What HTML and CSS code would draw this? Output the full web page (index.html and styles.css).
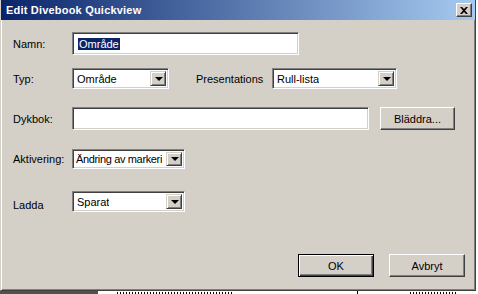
FILE: index.html
```html
<!DOCTYPE html>
<html lang="sv">
<head>
    <meta charset="UTF-8">
    <title>Edit Divebook Quickview</title>
    <link rel="stylesheet" href="styles.css">
</head>
<body>
    <div class="window">
        <div class="titlebar">
            <span class="title">Edit Divebook Quickview</span>
            <span class="close">
                <svg width="8" height="7" viewBox="0 0 8 7"><path d="M0 0h2l2 2 2-2h2L5 3.5 8 7H6L4 5 2 7H0l3-3.5z" fill="#000"/></svg>
            </span>
        </div>

        <div class="content">
            <div class="row row-namn">
                <label class="lbl">Namn:</label>
                <div class="field w-namn"><span class="sel">Område</span></div>
            </div>

            <div class="row row-typ">
                <label class="lbl">Typ:</label>
                <div class="combo w-typ"><span class="val">Område</span><span class="drop"></span></div>
                <label class="lbl-pres">Presentations</label>
                <div class="combo w-pres"><span class="val">Rull-lista</span><span class="drop"></span></div>
            </div>

            <div class="row row-dykbok">
                <label class="lbl">Dykbok:</label>
                <div class="field w-dykbok"></div>
                <button class="btn btn-browse">Bläddra...</button>
            </div>

            <div class="row row-akt">
                <label class="lbl">Aktivering:</label>
                <div class="combo w-akt"><span class="val">Ändring av markeri</span><span class="drop"></span></div>
            </div>

            <div class="row row-ladda">
                <label class="lbl lbl-low">Ladda</label>
                <div class="combo w-akt"><span class="val">Sparat</span><span class="drop"></span></div>
            </div>

            <div class="row row-buttons">
                <button class="btn btn-default">OK</button>
                <button class="btn">Avbryt</button>
            </div>
        </div>
    </div>

    <!-- bit of the window behind the dialog -->
    <div class="desk">
        <span class="desk-dark"></span>
        <span class="desk-ticks t1"></span>
        <span class="desk-line"></span>
        <span class="desk-ticks t2"></span>
    </div>
</body>
</html>
```

FILE: styles.css
```css
:root {
    --face: #d4d0c8;
    --shadow: #808080;
    --dark: #404040;
    --hilite: #ffffff;
    --navy: #0a246a;
}

body {
    margin: 0;
    background: #ffffff;
    font-family: 'Liberation Sans', Arial, sans-serif;
    font-size: 11px;
    color: #000;
}

.window {
    width: 472px;
    height: 289px;
    background: var(--face);
    border: 1px solid;
    border-top: 0;
    border-color: var(--face) var(--dark) var(--dark) var(--face);
    padding: 0 1px 1px 1px;
    box-shadow: inset 1px 0 var(--hilite), inset -1px -1px var(--shadow);
    display: flex;
    flex-direction: column;
}

.titlebar {
    height: 20px;
    margin: 0 -1px 0 -1px;
    background: linear-gradient(to right, var(--navy), #a6caf0);
    display: flex;
    align-items: center;
    justify-content: space-between;
    padding: 0 3px 0 5px;
}

.title {
    color: #fff;
    font-weight: bold;
    font-size: 11px;
    letter-spacing: 0.2px;
}

.close {
    width: 16px;
    height: 14px;
    box-sizing: border-box;
    background: var(--face);
    border: 1px solid;
    border-color: var(--hilite) var(--dark) var(--dark) var(--hilite);
    box-shadow: inset -1px -1px var(--shadow);
    display: flex;
    align-items: center;
    justify-content: center;
}

.content {
    padding-left: 11px;
    display: flex;
    flex-direction: column;
}

.row {
    display: flex;
    align-items: center;
}

.lbl {
    width: 59px;
    flex: none;
}

.lbl-low {
    align-self: flex-end;
    margin-bottom: 1px;
}

.row-namn { margin-top: 12px; }
.row-typ { margin-top: 13px; }
.row-dykbok { margin-top: 18px; }
.row-akt { margin-top: 19px; }
.row-ladda { margin-top: 22px; }
.row-buttons {
    margin-top: 42px;
    justify-content: flex-end;
    gap: 15px;
    padding-right: 9px;
}

/* sunken edit and combo boxes */
.field, .combo {
    box-sizing: border-box;
    background: #fff;
    border: 1px solid;
    border-color: var(--shadow) var(--hilite) var(--hilite) var(--shadow);
    box-shadow: inset 1px 1px var(--dark), inset -1px -1px var(--face);
    display: flex;
    align-items: center;
    flex: none;
}

.field { height: 23px; padding-left: 5px; }

.w-namn { width: 227px; }
.w-dykbok { width: 297px; }

.sel {
    background: var(--navy);
    color: #fff;
    padding: 0 1px;
    line-height: 12px;
}

.combo {
    padding: 2px;
    justify-content: space-between;
}

.w-typ { width: 97px; height: 21px; }
.w-pres { width: 125px; height: 21px; }
.w-akt { width: 113px; height: 21px; }
.row-akt .combo { height: 20px; }

.val {
    padding-left: 2px;
    white-space: nowrap;
    overflow: hidden;
}

.row-akt .val {
    padding-left: 1px;
    letter-spacing: -0.35px;
}

.drop {
    width: 16px;
    align-self: stretch;
    flex: none;
    box-sizing: border-box;
    background: var(--face);
    border: 1px solid;
    border-color: var(--face) var(--dark) var(--dark) var(--face);
    box-shadow: inset 1px 1px var(--hilite), inset -1px -1px var(--shadow);
    display: flex;
    align-items: center;
    justify-content: center;
}

.drop::after {
    content: "";
    border-left: 4px solid transparent;
    border-right: 4px solid transparent;
    border-top: 4px solid #000;
    margin-left: 1px;
}

.lbl-pres {
    margin-left: 27px;
    width: 76px;
}

/* push buttons */
.btn {
    font-family: inherit;
    font-size: 11px;
    color: #000;
    background: var(--face);
    box-sizing: border-box;
    width: 76px;
    height: 23px;
    padding: 0;
    border: 1px solid;
    border-color: var(--hilite) var(--dark) var(--dark) var(--hilite);
    box-shadow: inset -1px -1px var(--shadow);
}

.btn-browse {
    width: 75px;
    margin-left: 11px;
}

.btn-default {
    border: 1px solid #000;
    box-shadow: inset 1px 1px var(--hilite), inset -1px -1px var(--dark), inset -2px -2px var(--shadow);
}

.desk {
    height: 3px;
    display: flex;
    overflow: hidden;
}

.desk-dark {
    width: 98px;
    background: #505050;
}

/* tops of the letters in the window behind */
.desk-ticks {
    margin-top: 1px;
    background: repeating-linear-gradient(to right, #000 0 1px, transparent 1px 3px);
}

.t1 {
    margin-left: 19px;
    width: 116px;
}

.desk-line {
    width: 1px;
    margin-left: 124px;
    background: #000;
}

.t2 {
    margin-left: 52px;
    width: 46px;
}
```
